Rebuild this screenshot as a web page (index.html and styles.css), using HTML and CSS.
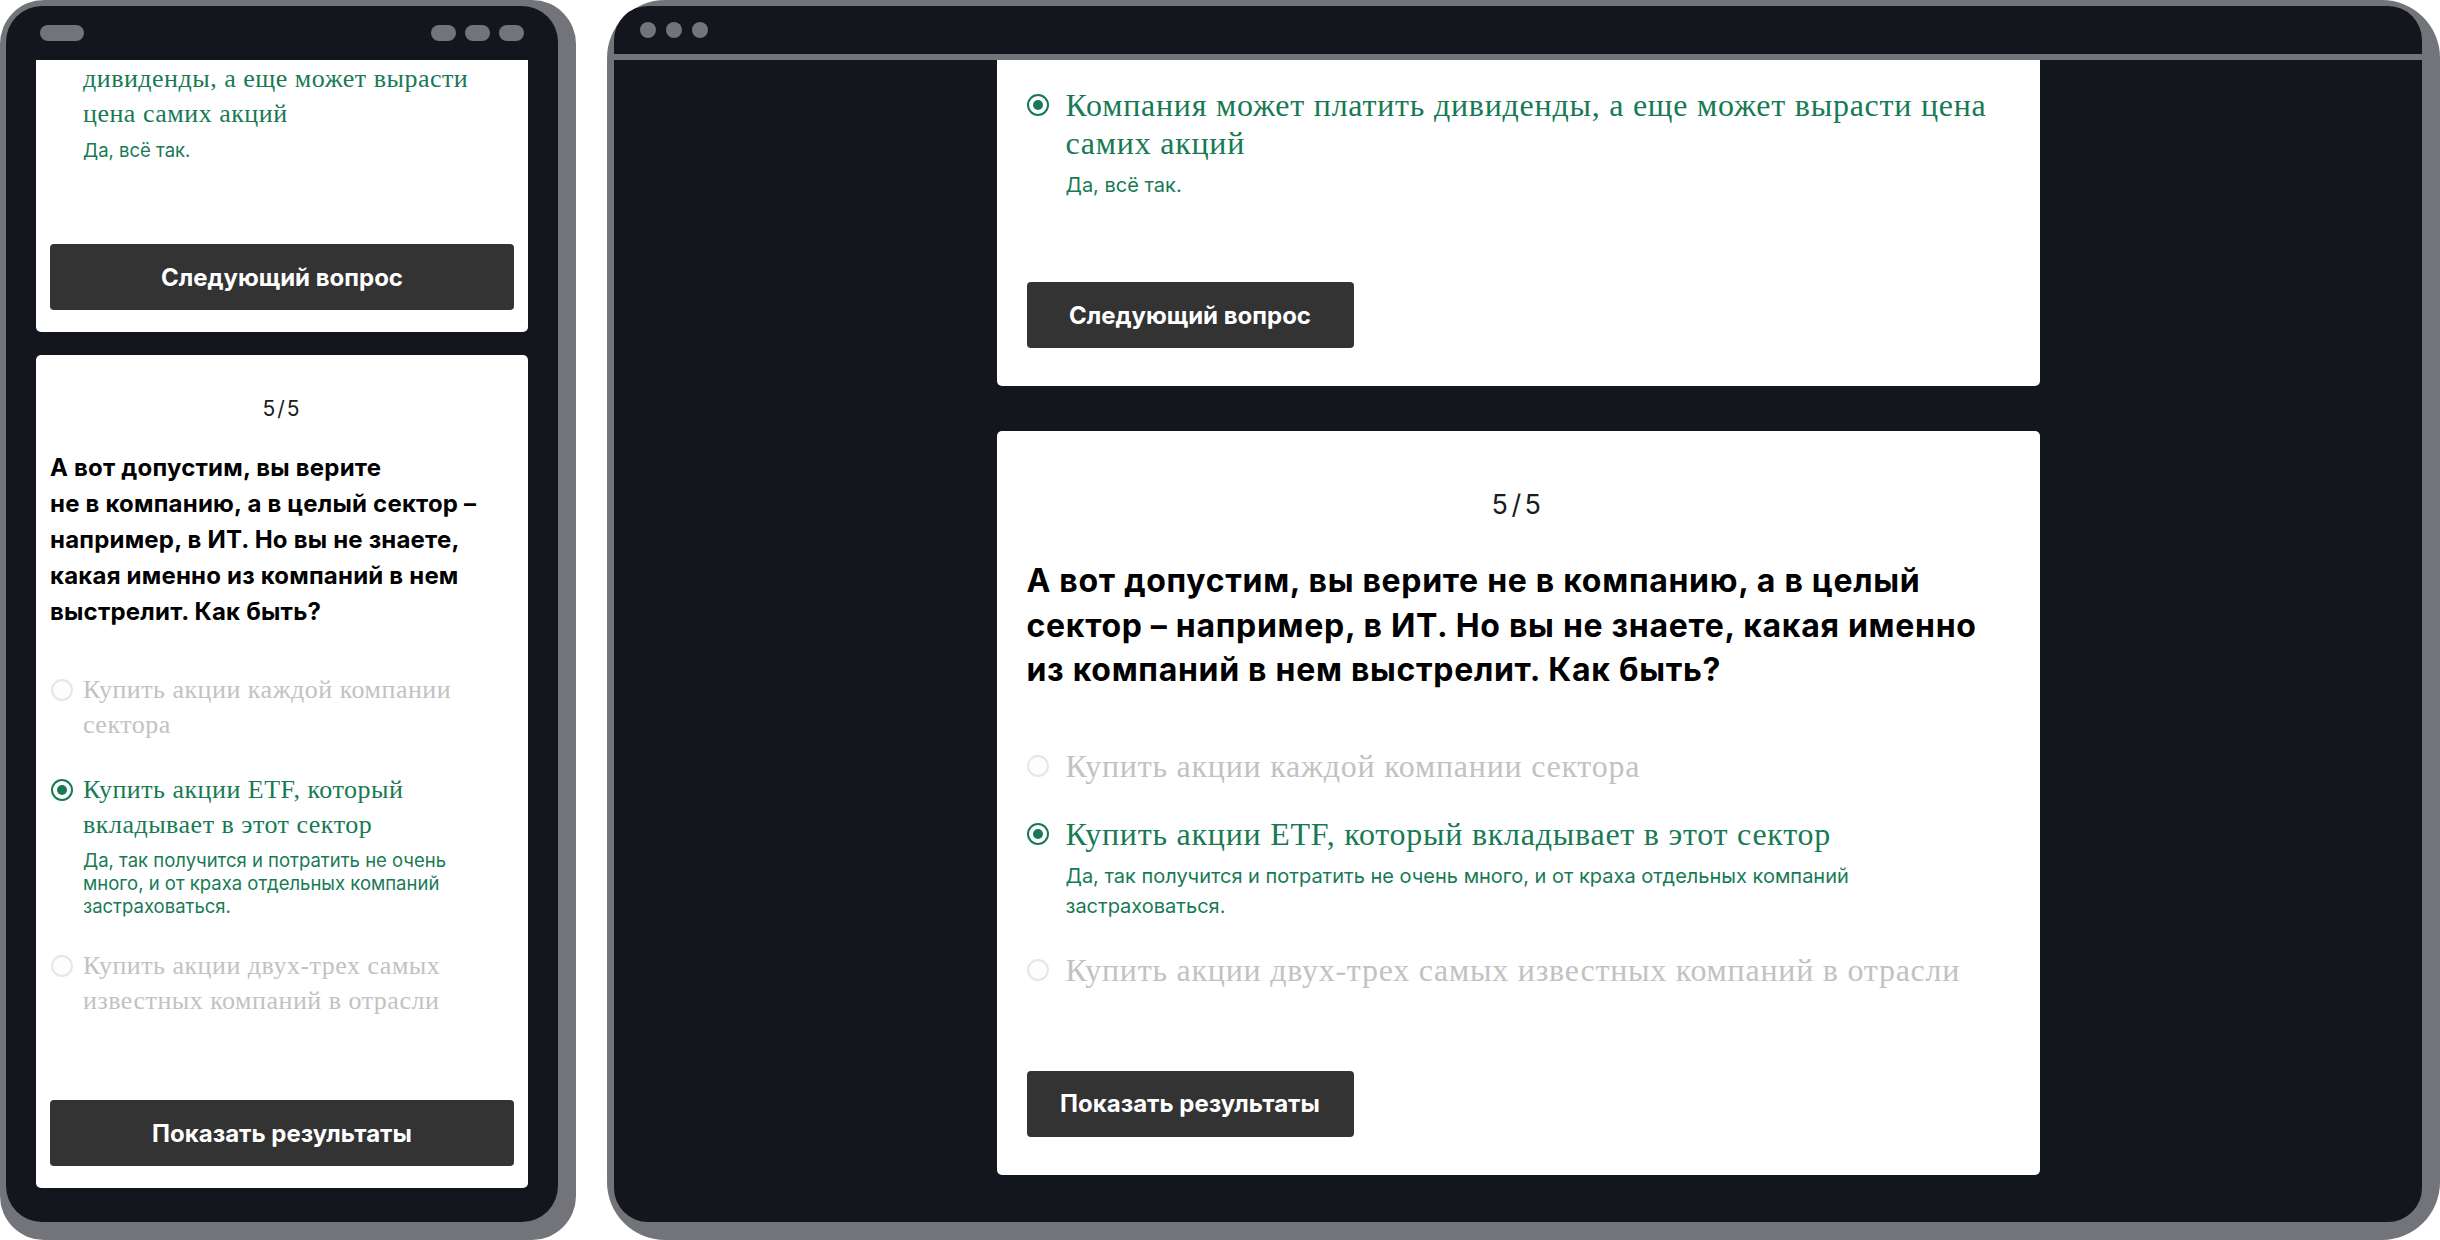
FILE: index.html
```html
<!DOCTYPE html>
<html lang="ru">
<head>
    <meta charset="UTF-8">
    <meta name="viewport" content="width=device-width, initial-scale=1.0">
    <title>Тест: акции, сектора и ETF</title>
    <link rel="stylesheet" href="styles.css">
</head>
<body>
    <div class="stage">
        <!-- mobile -->
        <div class="device phone">
            <div class="screen">
                <div class="phone-bar">
                    <span class="pill wide"></span>
                    <span class="pills">
                        <span class="pill"></span>
                        <span class="pill"></span>
                        <span class="pill"></span>
                    </span>
                </div>
                <div class="feed">
                    <div class="card card-prev">
                        <div class="options">
                            <div class="option picked">
                                <span class="radio"></span>
                                <div class="option-body">
                                    <div class="option-text">Компания может платить<br>дивиденды, а еще может вырасти<br>цена самих акций</div>
                                    <div class="note">Да, всё так.</div>
                                </div>
                            </div>
                        </div>
                        <button class="btn">Следующий вопрос</button>
                    </div>

                    <div class="card">
                        <div class="counter">5/5</div>
                        <div class="question">А вот допустим, вы верите<br>не в компанию, а в целый сектор –<br>например, в ИТ. Но вы не знаете,<br>какая именно из компаний в нем<br>выстрелит. Как быть?</div>
                        <div class="options">
                            <div class="option muted">
                                <span class="radio"></span>
                                <div class="option-body">
                                    <div class="option-text">Купить акции каждой компании<br>сектора</div>
                                </div>
                            </div>
                            <div class="option picked">
                                <span class="radio"></span>
                                <div class="option-body">
                                    <div class="option-text">Купить акции ETF, который<br>вкладывает в этот сектор</div>
                                    <div class="note">Да, так получится и потратить не очень<br>много, и от краха отдельных компаний<br>застраховаться.</div>
                                </div>
                            </div>
                            <div class="option muted">
                                <span class="radio"></span>
                                <div class="option-body">
                                    <div class="option-text">Купить акции двух-трех самых<br>известных компаний в отрасли</div>
                                </div>
                            </div>
                        </div>
                        <button class="btn">Показать результаты</button>
                    </div>
                </div>
            </div>
        </div>

        <!-- desktop -->
        <div class="device desktop">
            <div class="screen">
                <div class="browser-bar">
                    <span class="dot"></span>
                    <span class="dot"></span>
                    <span class="dot"></span>
                </div>
                <div class="feed">
                    <div class="card card-prev">
                        <div class="options">
                            <div class="option picked">
                                <span class="radio"></span>
                                <div class="option-body">
                                    <div class="option-text">Компания может платить дивиденды, а еще может вырасти цена<br>самих акций</div>
                                    <div class="note">Да, всё так.</div>
                                </div>
                            </div>
                        </div>
                        <button class="btn">Следующий вопрос</button>
                    </div>

                    <div class="card">
                        <div class="counter">5/5</div>
                        <div class="question">А вот допустим, вы верите не в компанию, а в целый<br>сектор – например, в ИТ. Но вы не знаете, какая именно<br>из компаний в нем выстрелит. Как быть?</div>
                        <div class="options">
                            <div class="option muted">
                                <span class="radio"></span>
                                <div class="option-body">
                                    <div class="option-text">Купить акции каждой компании сектора</div>
                                </div>
                            </div>
                            <div class="option picked">
                                <span class="radio"></span>
                                <div class="option-body">
                                    <div class="option-text">Купить акции ETF, который вкладывает в этот сектор</div>
                                    <div class="note">Да, так получится и потратить не очень много, и от краха отдельных компаний<br>застраховаться.</div>
                                </div>
                            </div>
                            <div class="option muted">
                                <span class="radio"></span>
                                <div class="option-body">
                                    <div class="option-text">Купить акции двух-трех самых известных компаний в отрасли</div>
                                </div>
                            </div>
                        </div>
                        <button class="btn">Показать результаты</button>
                    </div>
                </div>
            </div>
        </div>
    </div>
</body>
</html>
```

FILE: styles.css
```css
body {
    margin: 0;
    background: #ffffff;
    font-family: Inter, "Liberation Sans", sans-serif;
}
.stage {
    display: flex;
    gap: 31px;
    height: 1240px;
}

/* device frames */
.device {
    background: #737479;
    padding: 6px 18px 18px 6px;
    box-sizing: border-box;
    height: 1240px;
}
.phone {
    width: 576px;
    border-radius: 44px;
}
.desktop {
    flex: 1;
    border-radius: 58px;
    padding-left: 7px;
}
.screen {
    background: #13161d;
    height: 100%;
    display: flex;
    flex-direction: column;
    overflow: hidden;
}
.phone .screen {
    border-radius: 36px;
}
.desktop .screen {
    border-radius: 34px;
}

.phone-bar {
    height: 54px;
    flex-shrink: 0;
    display: flex;
    align-items: center;
    justify-content: space-between;
    padding: 0 34px;
}
.pills {
    display: flex;
    gap: 9px;
}
.pill {
    width: 25px;
    height: 16px;
    border-radius: 8px;
    background: #737479;
}
.pill.wide {
    width: 44px;
}

.browser-bar {
    height: 48px;
    flex-shrink: 0;
    display: flex;
    align-items: center;
    gap: 10px;
    padding: 0 26px;
    border-bottom: 6px solid #737479;
}
.dot {
    width: 16px;
    height: 16px;
    border-radius: 50%;
    background: #737479;
}

.feed {
    flex: 1;
    overflow: hidden;
    display: flex;
    flex-direction: column;
}
.phone .feed {
    padding: 0 30px;
    gap: 23px;
}
.desktop .feed {
    align-items: center;
    gap: 45px;
}

/* quiz card */
.card {
    background: #ffffff;
    border-radius: 5px;
    display: flex;
    flex-direction: column;
    align-items: flex-start;
}
.phone .card {
    padding: 39px 14px 22px;
}
.desktop .card {
    width: 1043px;
    box-sizing: border-box;
    padding: 56px 30px 38px;
}
.phone .card-prev {
    margin-top: -73px;
}
.desktop .card-prev {
    margin-top: -30px;
}
.phone .card-prev .note {
    margin-top: 8px;
}

.counter {
    align-self: center;
    color: #1c1c1c;
}
.phone .counter {
    font-size: 21px;
    line-height: 30px;
    letter-spacing: 2px;
}
.desktop .counter {
    font-size: 27px;
    line-height: 36px;
    letter-spacing: 3.5px;
}

.question {
    font-weight: 700;
    color: #000000;
}
.phone .question {
    font-size: 24px;
    line-height: 36px;
    letter-spacing: 0.2px;
    margin: 26px 0 42px;
}
.desktop .question {
    font-size: 32px;
    line-height: 44.5px;
    letter-spacing: 0.7px;
    margin: 36px 0 54px;
}

.options {
    display: flex;
    flex-direction: column;
    gap: 30px;
    margin-bottom: 82px;
}
.option {
    display: flex;
    align-items: flex-start;
}
.radio {
    width: 22px;
    height: 22px;
    box-sizing: border-box;
    border-radius: 50%;
    border: 2px solid #e6e6e6;
    background: #fdfdfd;
    flex-shrink: 0;
    display: flex;
    align-items: center;
    justify-content: center;
}
.phone .radio {
    margin: 7px 10px 0 1px;
}
.desktop .radio {
    margin: 8px 17px 0 0;
}
.picked .radio {
    border-color: #187a54;
    background: #ffffff;
}
.picked .radio::after {
    content: "";
    width: 10px;
    height: 10px;
    border-radius: 50%;
    background: #187a54;
}

.option-text {
    font-family: "Liberation Serif", "Times New Roman", serif;
}
.phone .option-text {
    font-size: 26px;
    line-height: 35px;
    letter-spacing: 0.5px;
}
.desktop .option-text {
    font-size: 32px;
    line-height: 38px;
    letter-spacing: 0.75px;
}
.picked .option-text,
.note {
    color: #187a54;
}
.muted .option-text {
    color: #c2c2c2;
}
.phone .note {
    font-size: 18.5px;
    line-height: 23px;
    margin-top: 7px;
}
.desktop .note {
    font-size: 20px;
    line-height: 30px;
    margin-top: 8px;
}

.btn {
    background: #333333;
    color: #ffffff;
    border: none;
    border-radius: 4px;
    height: 66px;
    font-family: Inter, "Liberation Sans", sans-serif;
    font-size: 24px;
    font-weight: 700;
    white-space: nowrap;
    cursor: pointer;
}
.phone .btn {
    align-self: stretch;
}
.desktop .btn {
    width: 327px;
}
```
